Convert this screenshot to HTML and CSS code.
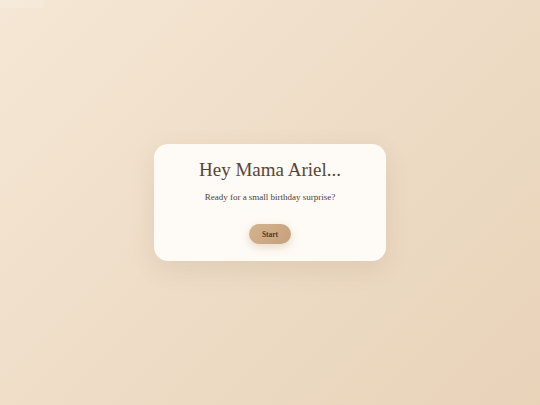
FILE: index.html
```html
<!DOCTYPE html>
<html lang="en">
<head>
  <meta charset="UTF-8" />
  <meta name="viewport" content="width=device-width, initial-scale=1.0" />
  <title>Hey Mama Ariel</title>
  <link rel="stylesheet" href="styles.css">
</head>
<body>
  <div class="music-slot"></div>

  <div class="card">
    <h1 class="title">Hey Mama Ariel...</h1>
    <p class="subtitle">Ready for a small birthday surprise?</p>
    <button class="start-btn">Start</button>
  </div>
</body>
</html>
```

FILE: styles.css
```css
* { margin: 0; padding: 0; box-sizing: border-box; }
html, body {
  height: 100%;
}
body {
  font-family: "Liberation Serif", Georgia, serif;
  background: linear-gradient(135deg, #f5e7d5 0%, #eedcc6 50%, #e8d3b9 100%);
  display: flex;
  align-items: center;
  justify-content: center;
  color: #5a4a3c;
}
.music-slot {
  position: absolute;
  top: 0;
  left: 0;
  width: 44px;
  height: 8px;
  background: rgba(255, 255, 255, 0.12);
}
.card {
  width: 232px;
  height: 117px;
  background: rgba(255, 252, 249, 0.93);
  border-radius: 14px;
  box-shadow: 0 8px 24px rgba(120, 90, 60, 0.12);
  text-align: center;
  padding-top: 14px;
}
.title {
  font-weight: normal;
  font-size: 19px;
  line-height: 24px;
  color: #574636;
}
.subtitle {
  font-size: 9px;
  line-height: 11px;
  margin-top: 10px;
  color: #4f4338;
}
.start-btn {
  display: block;
  margin: 21px auto 0;
  width: 42px;
  height: 20px;
  border: none;
  border-radius: 10px;
  background: linear-gradient(135deg, #d3b38f, #c5a17b);
  color: #4a3b2e;
  font-family: "Liberation Serif", Georgia, serif;
  font-size: 7.5px;
  font-weight: bold;
  box-shadow: 0 3px 8px rgba(180, 140, 100, 0.3);
  cursor: pointer;
}
```
